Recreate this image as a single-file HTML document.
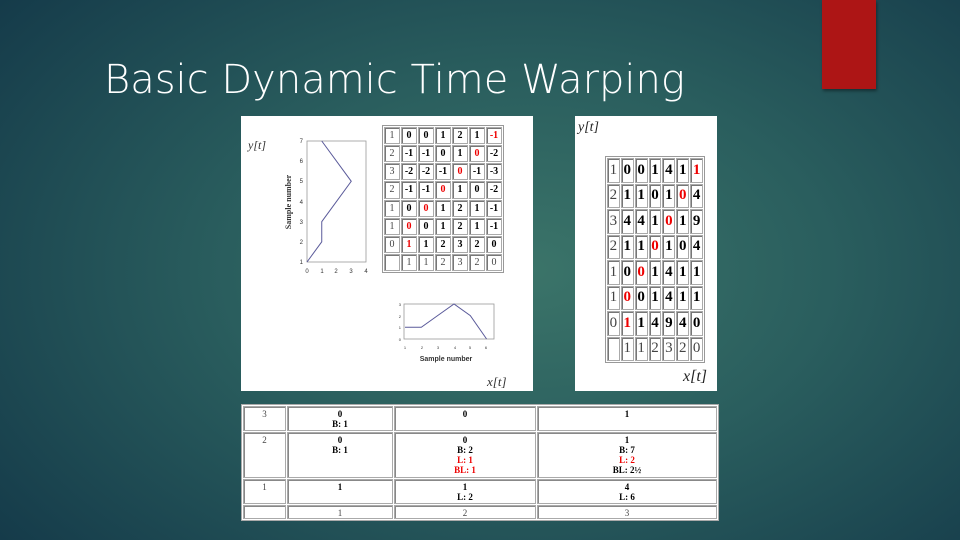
<!DOCTYPE html>
<html><head><meta charset="utf-8"><style>
*{margin:0;padding:0;box-sizing:border-box}
body{width:960px;height:540px;overflow:hidden;position:relative;font-family:"Liberation Serif",serif;
background:radial-gradient(ellipse 70% 80% at 55% 50%,#3b7469 0%,#2a5e5e 45%,#153b4a 100%)}
.abs{position:absolute}
h1{position:absolute;left:104px;top:57px;font:300 40px "DejaVu Sans","Liberation Sans",sans-serif;color:#fff;letter-spacing:0;white-space:nowrap}
.red{left:822px;top:0;width:54px;height:89px;background:#ad1515;box-shadow:1px 2px 3px rgba(0,0,0,.4)}
.panel{background:#fff}
.grid{position:absolute;display:grid;background:#fff;border:1px solid #999;padding:1px;gap:1px}
.grid div{border:1px solid #aaa;box-shadow:inset 1px 1px 0 #777;display:flex;align-items:center;justify-content:center;color:#000;font-weight:bold}
.grid div.n{font-weight:normal;color:#444}
.grid div.r{color:#e00}
table{position:absolute;border-collapse:separate;border-spacing:1px;background:#fff;border:1px solid #aaa;font-size:9px;font-weight:bold;text-align:center}
td{border:1px solid #aaa;box-shadow:inset 1px 1px 0 #888;vertical-align:top;padding-top:2px;line-height:10px}
td.n{font-weight:normal;color:#444}
.r{color:#e00}
</style></head><body>
<h1>Basic Dynamic Time Warping</h1>
<div class="abs red"></div>
<div class="abs panel" style="left:241px;top:116px;width:292px;height:275px"></div>
<div class="abs panel" style="left:575px;top:116px;width:142px;height:275px"></div>
<div class="abs" style="left:248px;top:138px;font:italic 12px 'Liberation Serif',serif;color:#333">y[<i>t</i>]</div>
<div class="abs" style="left:487px;top:374px;font:italic 13px 'Liberation Serif',serif;color:#333">x[t]</div>
<div class="abs" style="left:578px;top:120px;font:italic 14px 'Liberation Serif',serif;color:#222">y[t]</div>
<div class="abs" style="left:683px;top:368px;font:italic 16px 'Liberation Serif',serif;color:#222">x[t]</div>
<svg class="abs" style="left:241px;top:116px" width="292" height="275" font-family="Liberation Sans" font-size="6" fill="#333">
<rect x="66" y="25" width="59" height="121" fill="none" stroke="#999" stroke-width="0.8"/>
<polyline points="66,146 80.75,125.8 80.75,105.7 110.25,65.3 80.75,25" fill="none" stroke="#5a5a9a" stroke-width="1"/>
<g text-anchor="end"><text x="62" y="148">1</text><text x="62" y="128">2</text><text x="62" y="108">3</text><text x="62" y="88">4</text><text x="62" y="67">5</text><text x="62" y="47">6</text><text x="62" y="27">7</text></g>
<g text-anchor="middle"><text x="66" y="157">0</text><text x="81" y="157">1</text><text x="95" y="157">2</text><text x="110" y="157">3</text><text x="125" y="157">4</text></g>
<text transform="translate(50,86) rotate(-90)" text-anchor="middle" font-weight="bold" font-size="8" font-family="Liberation Serif">Sample number</text>
<rect x="163" y="188" width="90" height="35" fill="none" stroke="#999" stroke-width="0.8"/>
<polyline points="164,211.3 180.3,211.3 196.6,199.6 213,188 229.3,199.6 245.6,223" fill="none" stroke="#5a5a9a" stroke-width="1"/>
<g font-size="4" text-anchor="end"><text x="160" y="225">0</text><text x="160" y="213">1</text><text x="160" y="202">2</text><text x="160" y="190">3</text></g>
<g font-size="4" text-anchor="middle"><text x="164" y="233">1</text><text x="181" y="233">2</text><text x="197" y="233">3</text><text x="214" y="233">4</text><text x="229" y="233">5</text><text x="245" y="233">6</text></g>
<text x="205" y="245" text-anchor="middle" font-weight="bold" font-size="7">Sample number</text>
</svg>
<div class="grid" style="left:382px;top:125px;width:122px;height:148px;grid-template-columns:repeat(7,1fr);grid-template-rows:repeat(8,1fr);font-size:10px">
<div class="n">1</div><div>0</div><div>0</div><div>1</div><div>2</div><div>1</div><div class="r">-1</div>
<div class="n">2</div><div>-1</div><div>-1</div><div>0</div><div>1</div><div class="r">0</div><div>-2</div>
<div class="n">3</div><div>-2</div><div>-2</div><div>-1</div><div class="r">0</div><div>-1</div><div>-3</div>
<div class="n">2</div><div>-1</div><div>-1</div><div class="r">0</div><div>1</div><div>0</div><div>-2</div>
<div class="n">1</div><div>0</div><div class="r">0</div><div>1</div><div>2</div><div>1</div><div>-1</div>
<div class="n">1</div><div class="r">0</div><div>0</div><div>1</div><div>2</div><div>1</div><div>-1</div>
<div class="n">0</div><div class="r">1</div><div>1</div><div>2</div><div>3</div><div>2</div><div>0</div>
<div class="n"></div><div class="n">1</div><div class="n">1</div><div class="n">2</div><div class="n">3</div><div class="n">2</div><div class="n">0</div>
</div>
<div class="grid" style="left:605px;top:156px;width:100px;height:207px;grid-template-columns:repeat(7,1fr);grid-template-rows:repeat(8,1fr);font-size:15px;font-family:'Liberation Serif',serif">
<div class="n">1</div><div>0</div><div>0</div><div>1</div><div>4</div><div>1</div><div class="r">1</div>
<div class="n">2</div><div>1</div><div>1</div><div>0</div><div>1</div><div class="r">0</div><div>4</div>
<div class="n">3</div><div>4</div><div>4</div><div>1</div><div class="r">0</div><div>1</div><div>9</div>
<div class="n">2</div><div>1</div><div>1</div><div class="r">0</div><div>1</div><div>0</div><div>4</div>
<div class="n">1</div><div>0</div><div class="r">0</div><div>1</div><div>4</div><div>1</div><div>1</div>
<div class="n">1</div><div class="r">0</div><div>0</div><div>1</div><div>4</div><div>1</div><div>1</div>
<div class="n">0</div><div class="r">1</div><div>1</div><div>4</div><div>9</div><div>4</div><div>0</div>
<div class="n"></div><div class="n">1</div><div class="n">1</div><div class="n">2</div><div class="n">3</div><div class="n">2</div><div class="n">0</div>
</div>
<table style="left:241px;top:404px;width:478px;height:111px">
<tr style="height:25px"><td class="n" style="width:43px">3</td><td style="width:106px">0<br>B: 1</td><td style="width:142px">0</td><td>1</td></tr>
<tr style="height:46px"><td class="n">2</td><td>0<br>B: 1</td><td>0<br>B: 2<br><span class="r">L: 1<br>BL: 1</span></td><td>1<br>B: 7<br><span class="r">L: 2</span><br>BL: 2½</td></tr>
<tr style="height:25px"><td class="n">1</td><td>1</td><td>1<br>L: 2</td><td>4<br>L: 6</td></tr>
<tr style="height:13px"><td class="n"></td><td class="n">1</td><td class="n">2</td><td class="n">3</td></tr>
</table>
</body></html>
